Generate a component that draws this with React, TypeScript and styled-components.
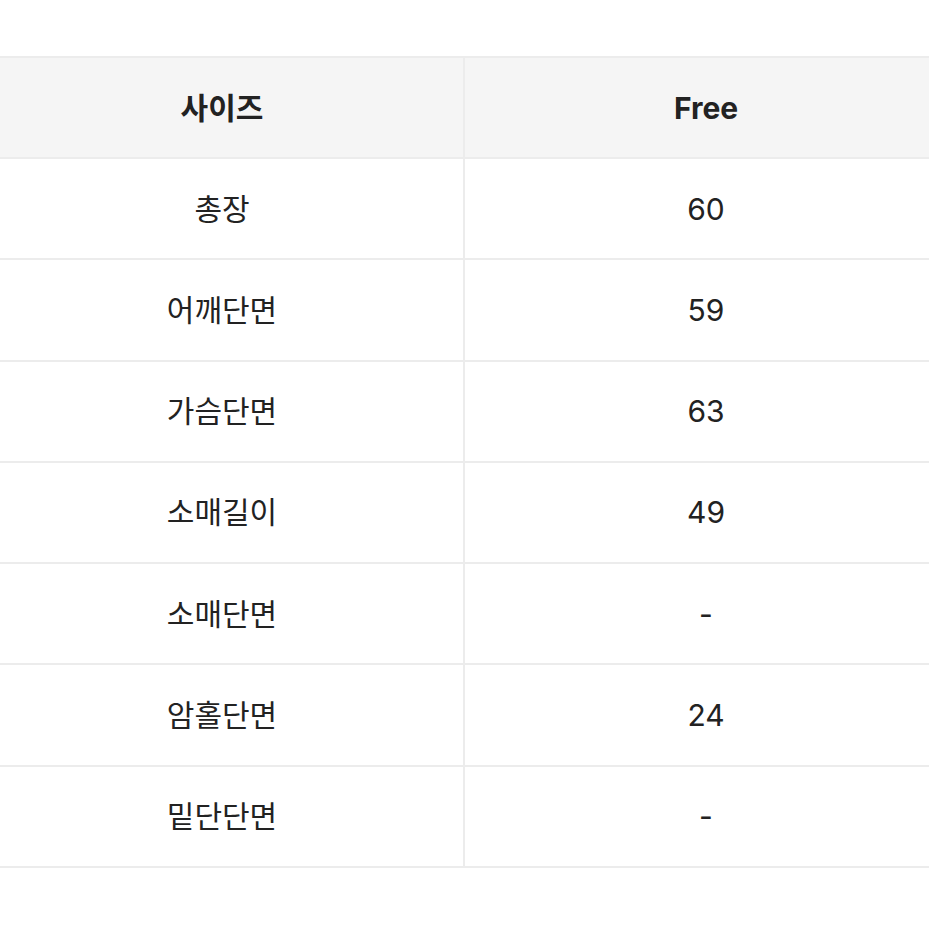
import React from "react";
import styled, { createGlobalStyle } from "styled-components";

const Global = createGlobalStyle`
  html, body { margin: 0; padding: 0; background: #ffffff; }
  body { font-family: Inter, "Noto Sans CJK KR", "Noto Sans", sans-serif; color: #222222; overflow: hidden; }
`;

const Page = styled.div`
  width: 929px;
  height: 929px;
  overflow: hidden;
  padding-top: 56px;
  box-sizing: border-box;
`;

const Table = styled.table`
  margin-left: -19px;
  width: 966px;
  border-collapse: collapse;
  table-layout: fixed;
  border-top: 2px solid #ececec;
`;

const Th = styled.th`
  height: 99px;
  padding: 0;
  background: #f5f5f5;
  font-weight: 700;
  font-size: 30px;
  line-height: 1.2;
  color: #222222;
  text-align: center;
  vertical-align: middle;
  border-bottom: 2px solid #ececec;
  & + & { border-left: 2px solid #ececec; }
`;

const Td = styled.td`
  height: 99.25px;
  padding: 0;
  font-weight: 400;
  font-size: 30px;
  line-height: 1.2;
  color: #222222;
  text-align: center;
  vertical-align: middle;
  border-bottom: 2px solid #ececec;
  & + & { border-left: 2px solid #ececec; }
`;

const rows: [string, string][] = [
  ["총장", "60"],
  ["어깨단면", "59"],
  ["가슴단면", "63"],
  ["소매길이", "49"],
  ["소매단면", "-"],
  ["암홀단면", "24"],
  ["밑단단면", "-"],
];

export default function App() {
  return (
    <Page>
      <Global />
      <Table>
        <thead>
          <tr>
            <Th>사이즈</Th>
            <Th>Free</Th>
          </tr>
        </thead>
        <tbody>
          {rows.map(([k, v]) => (
            <tr key={k}>
              <Td>{k}</Td>
              <Td>{v}</Td>
            </tr>
          ))}
        </tbody>
      </Table>
    </Page>
  );
}
